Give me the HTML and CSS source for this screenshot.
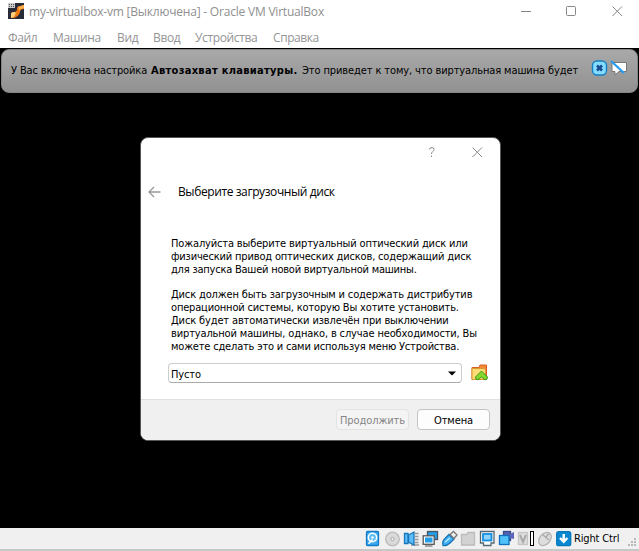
FILE: index.html
```html
<!DOCTYPE html>
<html lang="ru">
<head>
<meta charset="utf-8">
<title>my-virtualbox-vm</title>
<link rel="stylesheet" href="styles.css">
</head>
<body>
<div class="window">
  <header class="titlebar">
    <svg class="app-icon" width="16" height="16" viewBox="0 0 16 16"><rect width="16" height="16" fill="#292b38"/><path d="M3 15Q2 9 6 9Q9 9 9 6Q9 3 12 3L16 2V6Q12 6 12 9Q11 13 6 15Z" fill="#f27b16"/><path d="M3 10Q6 8 8 10L6 14L3 15Z" fill="#ffd07b"/><path d="M10 4L16 2V5L11 7Z" fill="#ffb04a"/><path d="M0 0H7V5H0Z" fill="#ccc"/><path d="M1 1.5H6M1 3.5H6" stroke="#555" stroke-dasharray="1 1"/></svg>
    <span class="title">my-virtualbox-vm [Выключена] - Oracle VM VirtualBox</span>
    <svg class="controls" width="106" height="12" viewBox="0 0 106 12" fill="none" stroke="#888"><path d="M0 6.5H10"/><rect x="45.5" y="1.5" width="9" height="9" rx="1"/><path d="M91.5 1.5L101 11M101 1.5L91.5 11"/></svg>
  </header>
  <nav class="menu">
    <span>Файл</span><span>Машина</span><span>Вид</span><span>Ввод</span><span>Устройства</span><span>Справка</span>
  </nav>
  <main class="screen">
    <div class="notice">
      <span class="n1">У Вас включена настройка</span><b class="n2">Автозахват клавиатуры.</b><span class="n3">Это приведет к тому, что виртуальная машина будет</span>
      <svg class="notice-icons" width="38" height="18" viewBox="0 0 38 18"><rect x="1.5" y="2" width="14" height="14" rx="4.5" fill="#84dcff" stroke="#1680c4" stroke-width="1.4"/><path d="M6 6.5L11 11.5M11 6.5L6 11.5" stroke="#174c91" stroke-width="2.6"/><path d="M21 3.5H35.5V12.5H33V12.5H28L24 16V12.5H21Z" fill="#fff" stroke="#777"/><path d="M20 2L33 14" stroke="#269cf0" stroke-width="2.2"/></svg>
    </div>
    <section class="dialog">
      <div class="dialog-bar"><svg width="58" height="12" viewBox="0 0 58 12" fill="none" stroke="#888"><path d="M3.5 3.5Q3.5 1.5 6 1.5Q8 1.5 8 3.5Q8 4.7 6.5 5.7Q5.5 6.5 5.5 8M5.5 9.5V11"/><path d="M46.5 1.5L56 11M56 1.5L46.5 11"/></svg></div>
      <div class="heading"><svg width="13" height="12" viewBox="0 0 13 12" fill="none" stroke="#999" stroke-width="1.3"><path d="M6 1L1 6L6 11M1 6H12.5"/></svg><h1>Выберите загрузочный диск</h1></div>
      <div class="body">
        <p><span class="l1">Пожалуйста выберите виртуальный оптический диск или</span><span class="l2">физический привод оптических дисков, содержащий диск</span><span class="l3">для запуска Вашей новой виртуальной машины.</span></p>
        <p><span class="l4">Диск должен быть загрузочным и содержать дистрибутив</span><span class="l5">операционной системы, которую Вы хотите установить.</span><span class="l6">Диск будет автоматически извлечён при выключении</span><span class="l7">виртуальной машины, однако, в случае необходимости, Вы</span><span class="l8">можете сделать это и сами используя меню Устройства.</span></p>
      </div>
      <div class="choose"><div class="combo"><span>Пусто</span><svg width="8" height="5" viewBox="0 0 8 5"><path d="M0 .5H8L4 4.5Z"/></svg></div>
        <svg width="18" height="17" viewBox="0 0 18 17"><path d="M1 15.5V3.5H8L9 1H15.5V15.5Z" fill="#f58a36" stroke="#d95f20"/><path d="M1 4.5H13L14.5 6V15.5H1Z" fill="#ffdc73" stroke="#d99a35"/><path d="M10.5 7L16.5 13Q16.5 16 14 15.8L10.5 13L7 15.8Q4.5 16 4.5 13Z" fill="#83d72d" stroke="#3b961e"/></svg></div>
      <footer><button class="disabled" disabled>Продолжить</button><button>Отмена</button></footer>
    </section>
  </main>
  <div class="status">
    <svg width="208" height="18" viewBox="0 0 208 18">
      <g fill="none" stroke-width="1.3">
      <rect x="1.5" y="1.5" width="12" height="14" rx="1" fill="#3ba9ee" stroke="#147bc7"/><circle cx="7.5" cy="7.5" r="4.2" fill="#5cbcf5" stroke="#fff" stroke-width="1.6"/><circle cx="7.5" cy="7.5" r="1.3" fill="#fff"/><path d="M3.5 13.8L7.5 9.5" stroke="#fff" stroke-width="1.6"/>
      <circle cx="27.5" cy="9" r="6.8" fill="#dadada" stroke="#bbb"/><circle cx="27.5" cy="9" r="1.7" fill="#eee" stroke="#aaa" stroke-width="1"/>
      <path d="M50 3.5H53.5M50 6.5H53.5M50 9.5H53.5M50 12.5H53.5M46 15H54" stroke="#999" stroke-width="1.6"/><path d="M39.5 3.5H43V13.5H39.5ZM43.5 5L49 2V15L43.5 12Z" fill="#5cbdf8" stroke="#1976ba"/>
      <rect x="62.5" y="1.5" width="10" height="8" fill="#239eea" stroke="#475461"/><rect x="58.2" y="5.8" width="11" height="8.5" fill="#fff" stroke="#555"/><rect x="60" y="7.5" width="7.5" height="5" fill="#239eea"/><path d="M60 16H67.5" stroke="#777"/>
      <path d="M78 15.5Q77 11 80 8.5L84 4.5L89 9L85 13Q82 16 78 15.5Z" fill="#43b3f4" stroke="#1771b5"/><path d="M85 4.5L88.5 1.5L92 5L89 8.5Z" fill="#eee" stroke="#777"/><path d="M80 12L85 8" stroke="#bbe9ff"/>
      <path d="M96.5 4.5H102L103 2.5H109.5V15H96.5Z" fill="#d2d2d2" stroke="#bbb"/>
      <path d="M115.5 1.5H129V13H126V15.5H118.5V13H115.5Z" fill="#fff" stroke="#586873"/><rect x="118" y="4" width="8.5" height="6.5" fill="#8fd4fb" stroke="#168ee0" stroke-width="1.8"/>
      <rect x="138.5" y="1.5" width="7" height="9" fill="#5361b6" stroke="#384b89"/><path d="M145 4L149 2V9L145 8Z" fill="#5d64bc"/><rect x="134.5" y="5.5" width="9.5" height="9" fill="#4fc2fb" stroke="#126fba"/>
      <rect x="153.5" y="2.5" width="9" height="12" fill="#ddd" stroke="#c5c5c5"/><path d="M155 5L158 12L161 5" stroke="#aaa" stroke-width="2"/><rect x="165.5" y="1.5" width="3" height="14" fill="#fff" stroke="#000" stroke-width="1"/>
      <ellipse cx="180" cy="9" rx="7.5" ry="5.2" transform="rotate(-48 180 9)" fill="#ddd" stroke="#b5b5b5"/><path d="M177.5 4.5L184 10M181 7L184 3.5" stroke="#aaa"/>
      <rect x="191.7" y="1.7" width="14" height="14" rx="2" fill="#0a87d0" stroke="#0878bb"/><path d="M198.7 4V11M195 8L198.7 11.7L202.4 8" stroke="#fff" stroke-width="2.4"/>
      </g></svg>
    <span>Right Ctrl</span>
    <svg class="grip" width="10" height="10" viewBox="0 0 10 10" fill="#b8b8b8"><path d="M7 0h2v2h-2zM4 3h2v2h-2zM7 3h2v2h-2zM1 6h2v2h-2zM4 6h2v2h-2zM7 6h2v2h-2z"/></svg>
  </div>
  <div class="edge"></div>
</div>
</body>
</html>
```
FILE: styles.css
```css
* { box-sizing: border-box; }
body { margin: 0; overflow: hidden; font: 11px/13px "DejaVu Sans Condensed", "DejaVu Sans", sans-serif; font-stretch: condensed; color: #000; }
.window { width: 639px; height: 551px; display: flex; flex-direction: column; background: #fff; white-space: nowrap; }
.titlebar { height: 24px; display: flex; align-items: center; padding: 0 12px 0 8px; font: 12px/16px "Open Sans", sans-serif; color: #8f8f8f; }
.app-icon { margin-top: -2px; }
.title { margin-left: 5px; letter-spacing: -.21px; }
.controls { margin-left: auto; margin-top: -2px; }
.menu { height: 24px; display: grid; grid-template-columns: 45px 64px 36px 42px 78px auto; padding: 6px 8px 0; font: 12px/16px "Open Sans", sans-serif; letter-spacing: -.37px; color: #949494; }
.menu span:last-child { letter-spacing: -.42px; }
.screen { height: 480px; background: #000; display: flex; flex-direction: column; align-items: center; }
.notice { width: 637px; height: 44px; margin-top: 1px; border: 1px solid #858585; border-radius: 8px; background: linear-gradient(#a9a9a9, #919191); display: flex; padding: 14px 8px 0 9px; }
.n1 { width: 140px; letter-spacing: -.13px; }
.n2 { width: 151px; letter-spacing: .3px; }
.n3 { letter-spacing: -.11px; }
.notice-icons { margin: -5px 0 0 auto; }
.dialog { width: 361px; height: 304px; margin: 44px 0 0 2px; border: 1px solid #555; border-radius: 8px; background: #fff; overflow: hidden; display: flex; flex-direction: column; }
.dialog-bar { height: 29px; display: flex; justify-content: flex-end; padding: 8px 16px 0 0; }
.heading { height: 50px; display: flex; align-items: center; padding-left: 7px; }
.heading h1 { margin: 0 0 0 17px; font: 12px/16px "Open Sans", sans-serif; letter-spacing: -.4px; }
.body { height: 142px; padding: 20px 0 0 30px; }
.body p { margin: 0 0 12px; }
.body span { display: block; width: max-content; }
.body .l1, .body .l4 { letter-spacing: -.15px; }
.body .l2, .body .l5 { letter-spacing: -.17px; }
.body .l3 { letter-spacing: -.22px; }
.body .l6, .body .l7 { letter-spacing: -.14px; }
.body .l8 { letter-spacing: -.19px; }
.choose { height: 40px; display: flex; align-items: flex-start; padding: 4px 0 0 27px; gap: 9px; }
.choose > svg { margin-top: 1px; }
.combo { width: 294px; height: 20px; border: 1px solid #ccc; border-bottom-color: #aaa; border-radius: 4px; display: flex; align-items: center; justify-content: space-between; padding: 2px 5px 0 2px; letter-spacing: -.15px; }
.combo svg { margin-top: -2px; }
footer { height: 41px; background: #f0f0f0; border-top: 1px solid #dfdfdf; display: flex; justify-content: flex-end; gap: 8px; padding: 9px 10px; }
button { width: 73px; height: 21px; padding: 1px 0 0; border: 1px solid #c4c4c4; border-radius: 4px; background: #fdfdfd; color: #000; font: inherit; letter-spacing: -.1px; }
button.disabled { background: #f4f4f4; border-color: #e3e3e3; color: #858585; }
.status { height: 21px; background: #f0f0f0; display: flex; align-items: center; padding-left: 365px; }
.status span { margin-left: 1px; width: 53px; letter-spacing: -.15px; }
.grip { margin-top: 9px; }
.edge { height: 2px; background: #c8c8c8; }
```
